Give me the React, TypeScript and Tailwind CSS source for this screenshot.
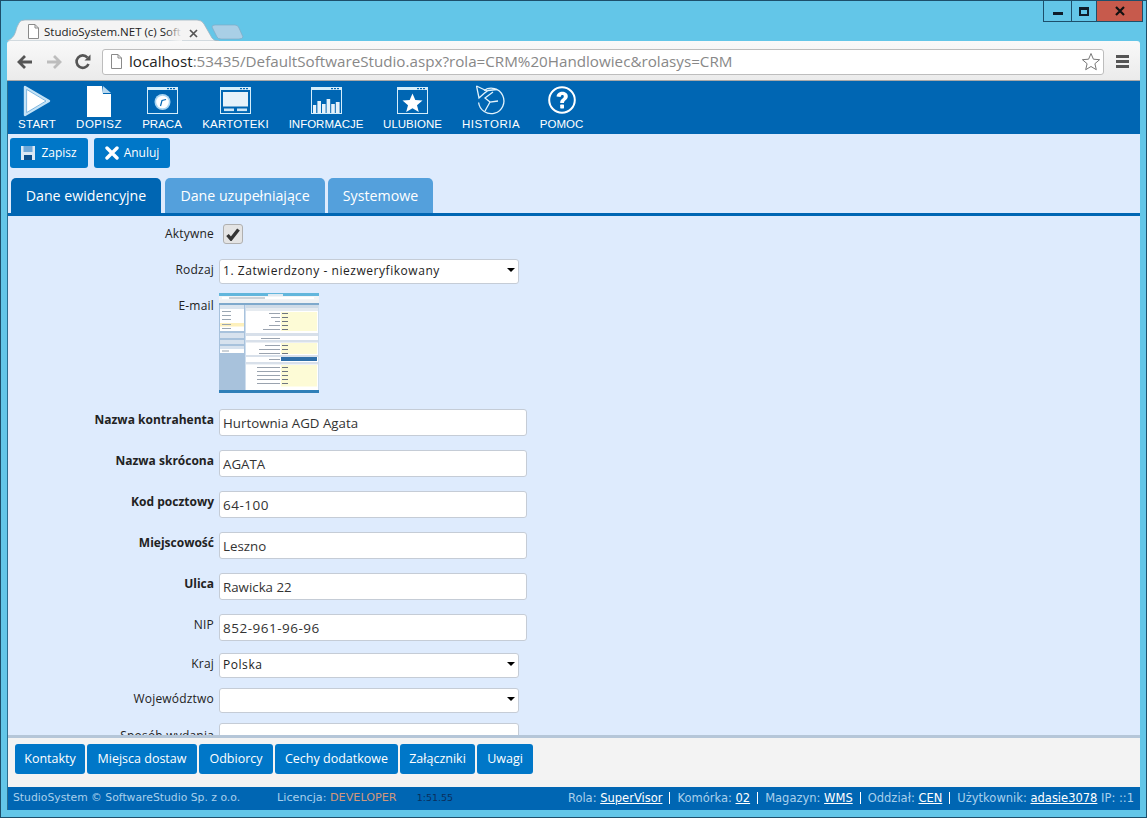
import React from "react";

const WinIcon = ({ children }: { children: React.ReactNode }) => (
  <svg width="31" height="27" viewBox="0 0 31 27" fill="none" className="mb-[4px]">
    <rect x=".5" y=".5" width="30" height="26" stroke="#d5eefb" strokeWidth="1" />
    <rect x="0" y="0" width="31" height="3" fill="#d5eefb" />
    <rect x="20" y="1" width="2" height="1.2" fill="#0066b3" />
    <rect x="23" y="1" width="2" height="1.2" fill="#0066b3" />
    <rect x="26" y="1" width="2" height="1.2" fill="#0066b3" />
    {children}
  </svg>
);

const navItems: { label: string; w: string; icon: React.ReactNode }[] = [
  {
    label: "START",
    w: "w-[38px] tracking-[0.25px]",
    icon: (
      <svg width="28" height="32" viewBox="0 0 28 32" className="mb-[1px]">
        <path d="M2 2 L26 16 L2 30 Z" fill="#fff" stroke="#c4e3f7" strokeWidth="2.4" strokeLinejoin="round" />
        <path d="M3.6 4.4 L23 16 L3.6 27.6 Z" fill="#fff" stroke="#4a9ad3" strokeWidth="0.7" strokeLinejoin="round" />
      </svg>
    ),
  },
  {
    label: "DOPISZ",
    w: "w-[46px] tracking-[0.5px]",
    icon: (
      <svg width="24" height="31" viewBox="0 0 24 31" className="mb-[1px]">
        <path d="M0 0 H15 L16 8 H24 V31 H0 Z" fill="#fff" />
        <path d="M16 0 L24 7 H16 Z" fill="#b9d8ef" />
      </svg>
    ),
  },
  {
    label: "PRACA",
    w: "w-[40px]",
    icon: (
      <WinIcon>
        <circle cx="15.5" cy="15" r="8" fill="#a9d5f1" />
        <circle cx="15.5" cy="15" r="6.3" fill="#fff" />
        <path d="M13.5 19 L15 13.5 L19 12.5" stroke="#0066b3" strokeWidth="1.2" />
      </WinIcon>
    ),
  },
  {
    label: "KARTOTEKI",
    w: "w-[67px] tracking-[0.2px]",
    icon: (
      <WinIcon>
        <rect x="3" y="5" width="25" height="14.5" fill="#e6f2fa" />
        <rect x="4" y="21.5" width="10" height="2.6" fill="#cfe6f6" />
        <rect x="17" y="21.5" width="10" height="2.6" fill="#cfe6f6" />
      </WinIcon>
    ),
  },
  {
    label: "INFORMACJE",
    w: "w-[74px]",
    icon: (
      <WinIcon>
        <rect x="2" y="18" width="3.2" height="8" fill="#e6f2fa" />
        <rect x="6.4" y="14" width="3.6" height="12" fill="#e6f2fa" />
        <rect x="11" y="17" width="3.6" height="9" fill="#e6f2fa" />
        <rect x="15.6" y="12" width="3.6" height="14" fill="#e6f2fa" />
        <rect x="20.2" y="17" width="3.6" height="9" fill="#e6f2fa" />
        <rect x="24.8" y="15" width="3.8" height="11" fill="#e6f2fa" />
      </WinIcon>
    ),
  },
  {
    label: "ULUBIONE",
    w: "w-[59px]",
    icon: (
      <WinIcon>
        <path d="M15.5 6.5 L18.3 13 L25.5 13.6 L20 18.2 L21.8 25 L15.5 21.3 L9.2 25 L11 18.2 L5.5 13.6 L12.7 13 Z" fill="#fff" />
      </WinIcon>
    ),
  },
  {
    label: "HISTORIA",
    w: "w-[58px] tracking-[0.5px]",
    icon: (
      <svg width="30" height="30" viewBox="0 0 30 30" fill="none" stroke="#e2f3fc" strokeWidth="1.3" className="mb-[3px]">
        <path d="M8 5.5 A12.7 12.7 0 1 1 2.6 17.5" />
        <path d="M0.5 1 L3 13 L8 8.5 L12 5.5 L21 4.5" />
        <path d="M0.5 1 L11 6" />
        <path d="M17 7 L9 13 L14 17" />
        <path d="M22 16 L14 17 L9 26" />
      </svg>
    ),
  },
  {
    label: "POMOC",
    w: "w-[43px]",
    icon: (
      <svg width="28" height="28" viewBox="0 0 28 28" className="mb-[4px]">
        <circle cx="14" cy="14" r="12.8" fill="none" stroke="#fff" strokeWidth="2" />
        <path d="M8.6 10.6 C8.8 4 19.8 4.2 19.8 10.2 C19.8 14 16 14 16 17 H12.2 C12 12.6 15.8 12.8 15.8 10.4 C15.8 8.4 12.8 8.4 12.6 11 Z" fill="#fff" />
        <rect x="12.2" y="18.6" width="3.8" height="3.8" rx=".6" fill="#fff" />
      </svg>
    ),
  },
];

const labelCls = "w-[206px] shrink-0 whitespace-nowrap text-right text-[12px] leading-[18px] tracking-[0.2px] text-[#222]";

const Input = ({ label, value, bold, digits, mt }: { label: string; value: string; bold?: boolean; digits?: boolean; mt: string }) => (
  <div className={`flex ${mt}`}>
    <label className={`${labelCls} pt-[2px] ${bold ? "font-bold !tracking-normal text-[#111]" : ""}`}>{label}</label>
    <input
      readOnly
      value={value}
      className={`ml-[5px] h-[27px] w-[308px] rounded-[3px] border border-[#c5ccd6] bg-white px-[3px] text-[#333] outline-none ${digits ? "text-[13.5px] tracking-[0.5px]" : "text-[13.3px]"}`}
    />
  </div>
);

const Select = ({ label, value, mt }: { label: string; value: string; mt: string }) => (
  <div className={`flex ${mt}`}>
    <label className={`${labelCls} pt-[4px]`}>{label}</label>
    <div className="relative ml-[5px] h-[25px] w-[300px]">
      <select
        value={value}
        onChange={() => {}}
        className="h-full w-full appearance-none rounded-[3px] border border-[#c5ccd6] bg-white px-[3px] text-[12px] tracking-[0.55px] text-[#222] outline-none"
      >
        <option value={value}>{value}</option>
      </select>
      <span className="pointer-events-none absolute right-[4px] top-[11px] h-0 w-0 border-x-[4px] border-t-[4px] border-x-transparent border-t-black" />
    </div>
  </div>
);

const Thumbnail = () => (
  <svg width="100" height="100" viewBox="0 0 100 100" className="ml-[5px] shrink-0">
    <rect width="100" height="100" fill="#cfdeee" />
    <rect width="100" height="3" fill="#62b6dc" />
    <rect x="49" y="1" width="15" height="2" fill="#dfeaf2" />
    <rect y="3" width="100" height="4" fill="#f2f4f6" />
    <rect x="3" y="4" width="92" height="2" fill="#fff" />
    <rect x="10" y="4.5" width="36" height="1" fill="#9aa6b2" />
    <rect y="7" width="100" height="3" fill="#eef1f4" />
    <rect y="10" width="100" height="2" fill="#7fa9cc" />
    <rect y="12" width="26" height="85" fill="#a8c2dc" />
    <rect x="1" y="12" width="24" height="4" fill="#dbe5ef" />
    <rect x="1" y="16" width="24" height="22" fill="#fff" />
    <rect x="1" y="30" width="24" height="3.5" fill="#fdf0bc" />
    {[18, 22, 26, 31, 35].map((y) => (
      <rect key={y} x="3" y={y} width="9" height="1" fill="#9aa6b2" />
    ))}
    <rect x="1" y="40" width="24" height="5" fill="#d7e2ee" />
    <rect x="1" y="47" width="24" height="4" fill="#d7e2ee" />
    <rect x="1" y="53" width="24" height="3" fill="#d7e2ee" />
    <rect x="1" y="56" width="24" height="4" fill="#fff" />
    <rect x="3" y="57.5" width="7" height="1" fill="#9aa6b2" />
    <rect x="27" y="12" width="72" height="85" fill="#fff" />
    <rect x="27" y="12" width="72" height="3" fill="#cfdbe7" />
    <rect x="27" y="15" width="72" height="3" fill="#e6ebf0" />
    <rect x="62" y="19" width="36" height="19" fill="#fdfbd6" />
    <rect x="27" y="40" width="72" height="3" fill="#d8e0ea" />
    <rect x="27" y="47" width="72" height="2.5" fill="#d8e0ea" />
    <rect x="62" y="50" width="36" height="11" fill="#fdfbd6" />
    <rect x="27" y="62" width="72" height="2" fill="#d8e0ea" />
    <rect x="62" y="64" width="36" height="4" fill="#2f6fa8" />
    <rect x="27" y="69" width="72" height="2.4" fill="#d8e0ea" />
    <rect x="62" y="72" width="36" height="21.5" fill="#fdfbd6" />
    {[
      [50, 20],
      [52, 24],
      [56, 28],
      [50, 32],
      [44, 36],
      [42, 45],
      [46, 52],
      [40, 56],
      [40, 60],
      [50, 66],
      [38, 74],
      [38, 78],
      [38, 82],
      [38, 86],
      [38, 90],
    ].map(([x, y]) => (
      <rect key={y} x={x} y={y} width={61 - x} height="1" fill="#9aa3af" />
    ))}
    {[20, 24, 28, 32, 36, 52, 56, 60, 74, 78, 82, 86, 90].map((y) => (
      <rect key={y} x="63" y={y} width="6" height="1" fill="#6d7580" />
    ))}
    <rect y="97" width="100" height="3" fill="#2f7fb8" />
  </svg>
);

export default function App() {
  return (
    <div className="relative flex h-[818px] w-[1147px] flex-col overflow-hidden border border-[#1d4f6b] bg-[#63c6e8] font-['Open_Sans','Noto_Sans',sans-serif]">
      {/* window controls */}
      <div className="absolute right-[3px] top-0 flex h-[21px] border-x border-b border-[#1d4f6b]">
        <div className="flex w-[28px] items-center justify-center border-r border-[#1d4f6b]">
          <span className="mt-[5px] h-[3px] w-[10px] bg-[#0e1c2a]" />
        </div>
        <div className="flex w-[25px] items-center justify-center border-r border-[#1d4f6b]">
          <span className="h-[9px] w-[10px] border-2 border-t-[3px] border-[#0e1c2a]" />
        </div>
        <div className="flex w-[45px] items-center justify-center bg-[#c75a4c]">
          <svg width="10" height="10" viewBox="0 0 10 10"><path d="M1 1 L9 9 M9 1 L1 9" stroke="#111" strokeWidth="2.2" /></svg>
        </div>
      </div>

      {/* tab strip */}
      <div className="relative h-[40px] shrink-0">
        <svg width="260" height="40" viewBox="0 0 260 40" className="absolute left-[2px] top-0">
          <path d="M4 40 C11 37 12 33 14 26 L16 22 Q17 19 22 19 H194 Q199 19 201 23 L209 37 Q211 40 216 40 Z" fill="#f4f4f4" stroke="#9fb4c0" strokeWidth="0.8" />
          <path d="M209 26 Q209 24 212 24 H232 Q235 24 236 27 L240 36 Q239 38 236 38 H218 Q215 38 214 36 Z" fill="#a9cfe6" stroke="#7fa9c4" strokeWidth="0.7" />
        </svg>
        <svg width="13" height="15" viewBox="0 0 13 15" className="absolute left-[26px] top-[23px]">
          <path d="M1.5 .5 H8 L11.5 4 V14.5 H1.5 Z M8 .5 V4 H11.5" fill="#fff" stroke="#8a8a8a" />
        </svg>
        <span className="absolute left-[43px] top-[22px] w-[138px] overflow-hidden whitespace-nowrap text-[11.5px] leading-[18px] text-[#222]">
          StudioSystem.NET (c) Soft
        </span>
        <span className="absolute left-[165px] top-[22px] h-[18px] w-[16px] bg-gradient-to-r from-[#f4f4f4]/0 to-[#f4f4f4]" />
        <svg width="9" height="9" viewBox="0 0 9 9" className="absolute left-[188px] top-[28px]">
          <path d="M1 1 L8 8 M8 1 L1 8" stroke="#555" strokeWidth="1.7" />
        </svg>
      </div>

      {/* browser toolbar */}
      <div className="mx-[6px] flex h-[40px] shrink-0 items-center rounded-t-[3px] border-b border-[#a9a9a9] bg-gradient-to-b from-[#f9f9f9] to-[#ebebeb] pl-[9px] pt-[2px]">
        <svg width="18" height="16" viewBox="0 0 18 16" fill="none"><path d="M16 8 H4 M9 2 L3 8 L9 14" stroke="#555" strokeWidth="2.8" /></svg>
        <svg width="18" height="16" viewBox="0 0 18 16" fill="none" className="ml-[11px]"><path d="M2 8 H14 M9 2 L15 8 L9 14" stroke="#bdbdbd" strokeWidth="2.8" /></svg>
        <svg width="18" height="18" viewBox="0 0 18 18" fill="none" className="ml-[11px]"><path d="M14.5 11 A6.2 6.2 0 1 1 13.5 4.6" stroke="#555" strokeWidth="2.6" /><path d="M10.5 7.5 H16.5 V1.5 Z" fill="#555" /></svg>
        <div className="ml-[10px] flex h-[26px] w-[1002px] shrink-0 items-center rounded-[3px] border border-[#bdbdbd] bg-white pl-[7px]">
          <svg width="13" height="15" viewBox="0 0 13 15"><path d="M1.5 .5 H8 L11.5 4 V14.5 H1.5 Z M8 .5 V4 H11.5" fill="#fff" stroke="#8a8a8a" /></svg>
          <span className="ml-[6px] whitespace-nowrap text-[15.2px] text-[#888]">
            <span className="text-[#222]">localhost</span>:53435/DefaultSoftwareStudio.aspx?rola=CRM%20Handlowiec&amp;rolasys=CRM
          </span>
          <svg width="20" height="19" viewBox="0 0 20 19" className="ml-auto mr-[2px]">
            <path d="M10 1.5 L12.4 7.2 L18.6 7.7 L13.9 11.7 L15.3 17.7 L10 14.5 L4.7 17.7 L6.1 11.7 L1.4 7.7 L7.6 7.2 Z" fill="#fff" stroke="#777" />
          </svg>
        </div>
        <div className="ml-[12px] flex flex-col gap-[2px]">
          <span className="h-[3px] w-[13px] bg-[#555]" />
          <span className="h-[3px] w-[13px] bg-[#555]" />
          <span className="h-[3px] w-[13px] bg-[#555]" />
        </div>
      </div>

      {/* app */}
      <div className="mx-[6px] flex min-h-0 flex-1 flex-col border-l border-[#2a6d8e] bg-[#deebfd]">
        <nav className="flex h-[53px] shrink-0 gap-5 bg-[#0066b3] pl-[10px] font-['Liberation_Sans',Arial,sans-serif] text-[11.5px] text-white">
          {navItems.map((n) => (
            <div key={n.label} className={`flex flex-col items-center whitespace-nowrap ${n.w}`}>
              <div className="flex h-[37px] items-end">{n.icon}</div>
              <span className="leading-[13px]">{n.label}</span>
            </div>
          ))}
        </nav>

        <div className="flex h-[44px] shrink-0 items-start gap-[6px] pl-[2px] pt-[4px]">
          <button className="flex h-[30px] w-[78px] items-center justify-center gap-[6px] rounded-[3px] bg-[#0077c8] text-[12px] text-white">
            <svg width="14" height="14" viewBox="0 0 14 14">
              <rect width="14" height="14" fill="#dbe8f4" />
              <rect x="2.5" y="0" width="9" height="6" fill="#6fa8d8" />
              <rect x="3" y="9" width="8" height="5" fill="#0b4f8c" />
            </svg>
            Zapisz
          </button>
          <button className="flex h-[30px] w-[76px] items-center justify-center gap-[5px] rounded-[3px] bg-[#0077c8] text-[12px] text-white">
            <svg width="14" height="14" viewBox="0 0 14 14"><path d="M2 2 L12 12 M12 2 L2 12" stroke="#fff" strokeWidth="3.4" strokeLinecap="round" /></svg>
            Anuluj
          </button>
        </div>

        <div className="flex h-[35px] shrink-0 gap-[4px] pl-[3px] text-[14.2px] text-white">
          <div className="flex w-[150px] items-center justify-center rounded-t-[5px] bg-[#0066b3]">Dane ewidencyjne</div>
          <div className="flex w-[160px] items-center justify-center rounded-t-[5px] bg-[#54a0dc]">Dane uzupełniające</div>
          <div className="-ml-px flex w-[105px] items-center justify-center rounded-t-[5px] bg-[#54a0dc]">Systemowe</div>
        </div>
        <div className="h-[3px] shrink-0 bg-[#0066b3]" />

        <div className="min-h-0 flex-1 overflow-hidden">
          <div className="mt-[8px] flex items-start">
            <label className={`${labelCls} pt-[1px]`}>Aktywne</label>
            <span className="ml-[9px] flex h-[20px] w-[20px] items-center justify-center rounded-[3px] border border-[#b0b0b0] bg-[#e4e4e4]">
              <svg width="14" height="13" viewBox="0 0 14 13"><path d="M1.5 7 L5 11 L12.5 1.5" fill="none" stroke="#333" strokeWidth="3.4" /></svg>
            </span>
          </div>
          <Select label="Rodzaj" value="1. Zatwierdzony - niezweryfikowany" mt="mt-[13px]" />
          <div className="mt-[11px] flex items-start">
            <label className={`${labelCls} pt-[4px]`}>E-mail</label>
            <Thumbnail />
          </div>
          <Input label="Nazwa kontrahenta" value="Hurtownia AGD Agata" bold mt="mt-[16px]" />
          <Input label="Nazwa skrócona" value="AGATA" bold mt="mt-[14px]" />
          <Input label="Kod pocztowy" value="64-100" bold digits mt="mt-[14px]" />
          <Input label="Miejscowość" value="Leszno" bold mt="mt-[14px]" />
          <Input label="Ulica" value="Rawicka 22" bold mt="mt-[14px]" />
          <Input label="NIP" value="852-961-96-96" digits mt="mt-[14px]" />
          <Select label="Kraj" value="Polska" mt="mt-[10px]" />
          <Select label="Województwo" value="" mt="mt-[10px]" />
          <div className="mt-[10px] flex pt-[2px]">
            <label className={`${labelCls} pt-[4px]`}>Sposób wydania</label>
            <div className="ml-[5px] h-[27px] w-[300px] shrink-0 rounded-[3px] border border-[#c5ccd6] bg-white" />
          </div>
        </div>

        <div className="flex h-[52px] shrink-0 items-start gap-[2px] border-t-[3px] border-[#b5c6d8] bg-[#f3f3f3] pl-[7px] pt-[6px]">
          {[
            ["Kontakty", "w-[70px]"],
            ["Miejsca dostaw", "w-[110px]"],
            ["Odbiorcy", "w-[74px]"],
            ["Cechy dodatkowe", "w-[123px]"],
            ["Załączniki", "w-[75px]"],
            ["Uwagi", "w-[56px]"],
          ].map(([t, w]) => (
            <button key={t} className={`flex h-[30px] items-center justify-center whitespace-nowrap rounded-[3px] bg-[#0077c8] text-[12.5px] text-white ${w}`}>
              {t}
            </button>
          ))}
        </div>

        <footer className="flex h-[23px] shrink-0 items-center whitespace-nowrap bg-[#0066b3] pl-[5px] pr-[6px] font-['DejaVu_Sans',Verdana,sans-serif] text-[10.8px] text-[#a9d0ec]">
          <span>StudioSystem © SoftwareStudio Sp. z o.o.</span>
          <span className="ml-[37px] text-[11.2px]">
            Licencja: <span className="text-[#d0977c]">DEVELOPER</span>
          </span>
          <span className="ml-[20px] text-[9.5px] text-[#0b2f5c]">1:51.55</span>
          <span className="ml-auto flex items-center text-[11.5px]">
            <span>Rola:&nbsp;<a className="text-white underline">SuperVisor</a></span>
            <span className="mx-[7px] h-[12px] w-px -translate-y-[1px] bg-white" />
            <span>Komórka:&nbsp;<a className="text-white underline">02</a></span>
            <span className="mx-[7px] h-[12px] w-px -translate-y-[1px] bg-white" />
            <span>Magazyn:&nbsp;<a className="text-white underline">WMS</a></span>
            <span className="mx-[7px] h-[12px] w-px -translate-y-[1px] bg-white" />
            <span>Oddział:&nbsp;<a className="text-white underline">CEN</a></span>
            <span className="mx-[7px] h-[12px] w-px -translate-y-[1px] bg-white" />
            <span>Użytkownik:&nbsp;<a className="text-white underline">adasie3078</a>&nbsp;IP:&nbsp;::1</span>
          </span>
        </footer>
      </div>
      <div className="h-[7px] shrink-0" />
    </div>
  );
}
